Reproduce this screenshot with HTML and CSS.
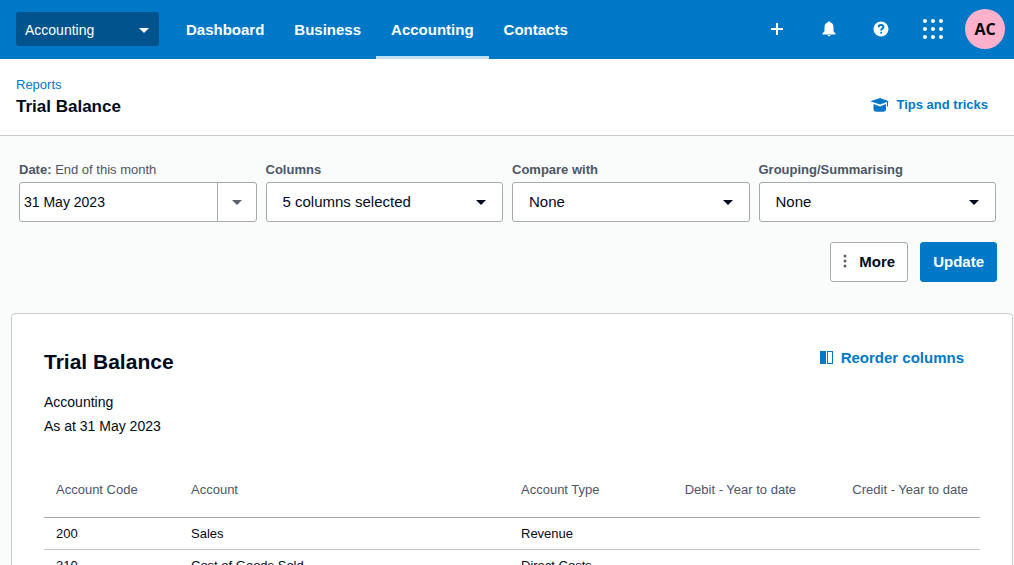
FILE: index.html
```html
<!DOCTYPE html>
<html lang="en">
<head>
<meta charset="utf-8">
<meta name="viewport" content="width=device-width, initial-scale=1">
<title>Trial Balance</title>
<link rel="stylesheet" href="styles.css">
</head>
<body>
<header class="topbar">
  <button class="org-switch" type="button">
    <span>Accounting</span>
    <svg class="caret" viewBox="0 0 10 5" aria-hidden="true"><path d="M0 0h10L5 5z"/></svg>
  </button>
  <nav class="tabs" aria-label="Main">
    <a class="tab" href="#">Dashboard</a>
    <a class="tab" href="#">Business</a>
    <a class="tab tab-active" href="#" aria-current="page">Accounting</a>
    <a class="tab" href="#">Contacts</a>
  </nav>
  <div class="tools">
    <button class="tool" type="button" aria-label="Create new">
      <svg width="12" height="12" viewBox="0 0 12 12"><path d="M5 0h2v5h5v2H7v5H5V7H0V5h5z"/></svg>
    </button>
    <button class="tool" type="button" aria-label="Notifications">
      <svg width="14" height="16" viewBox="0 0 14 16"><path d="M6 1.200a1 1 0 0 1 2 0C10.500 1.900 11.500 3.600 11.500 6v3.500c0 1 .6 1.700 2 2.700v1.300H.5v-1.300c1.400-1 2-1.700 2-2.700V6C2.500 3.600 3.500 1.900 6 1.200zM5.500 14h3a1.500 1.300 0 0 1-3 0z"/></svg>
    </button>
    <button class="tool" type="button" aria-label="Help">
      <svg width="16" height="16" viewBox="0 0 16 16"><circle cx="8" cy="8" r="7.500"/><path class="question" d="M5.700 6.200c0-1.500 1-2.300 2.300-2.300s2.400.8 2.400 2.100c0 1.600-2.300 1.600-2.300 3.500"/><path class="question-dot" d="M7.200 10.700h1.800v1.700H7.200z"/></svg>
    </button>
    <button class="tool" type="button" aria-label="Apps">
      <svg width="20" height="20" viewBox="0 0 20 20"><circle cx="2" cy="2" r="2"/><circle cx="10" cy="2" r="2"/><circle cx="18" cy="2" r="2"/><circle cx="2" cy="10" r="2"/><circle cx="10" cy="10" r="2"/><circle cx="18" cy="10" r="2"/><circle cx="2" cy="18" r="2"/><circle cx="10" cy="18" r="2"/><circle cx="18" cy="18" r="2"/></svg>
    </button>
    <button class="avatar" type="button">AC</button>
  </div>
</header>

<div class="page-head">
  <div>
    <a class="crumb" href="#">Reports</a>
    <h1 class="page-title">Trial Balance</h1>
  </div>
  <a class="tips" href="#">
    <svg width="20" height="16" viewBox="0 0 20 16" aria-hidden="true"><path d="M.3 4.200 10 1l9 3.200-1 .4V9.500h-1V5L10 7.500zM3.500 7 10 9.600 16 7v5.200c0 1.500-1.200 2.500-2.800 2.500H6.300c-1.600 0-2.800-1-2.800-2.500z"/></svg>
    <span>Tips and tricks</span>
  </a>
</div>

<main class="main">
  <form class="filters">
    <div class="filter-grid">
      <div class="field">
        <label class="label" for="date">Date: <span class="label-note">End of this month</span></label>
        <div class="date-box">
          <input class="date-input" id="date" type="text" value="31 May 2023">
          <button class="date-open" type="button" aria-label="Choose a date range">
            <svg class="caret" viewBox="0 0 10 5"><path d="M0 0h10L5 5z"/></svg>
          </button>
        </div>
      </div>
      <div class="field">
        <label class="label" for="columns">Columns</label>
        <div class="select-box">
          <select class="select" id="columns"><option>5 columns selected</option></select>
          <svg class="caret" viewBox="0 0 10 5" aria-hidden="true"><path d="M0 0h10L5 5z"/></svg>
        </div>
      </div>
      <div class="field">
        <label class="label" for="compare">Compare with</label>
        <div class="select-box">
          <select class="select" id="compare"><option>None</option></select>
          <svg class="caret" viewBox="0 0 10 5" aria-hidden="true"><path d="M0 0h10L5 5z"/></svg>
        </div>
      </div>
      <div class="field">
        <label class="label" for="grouping">Grouping/Summarising</label>
        <div class="select-box">
          <select class="select" id="grouping"><option>None</option></select>
          <svg class="caret" viewBox="0 0 10 5" aria-hidden="true"><path d="M0 0h10L5 5z"/></svg>
        </div>
      </div>
    </div>
    <div class="actions">
      <button class="btn" type="button">
        <svg width="4" height="16" viewBox="0 0 4 16" aria-hidden="true"><circle cx="2" cy="2" r="1.500"/><circle cx="2" cy="7" r="1.500"/><circle cx="2" cy="12" r="1.500"/></svg>
        <span>More</span>
      </button>
      <button class="btn btn-primary" type="button">Update</button>
    </div>
  </form>

  <section class="report">
    <div class="report-head">
      <h2 class="report-title">Trial Balance</h2>
      <button class="reorder" type="button">
        <svg width="13" height="15" viewBox="0 0 13 15" aria-hidden="true"><path d="M0 0h6v13H0zM7 0h6v13H7zm1 1v11h4V1z" fill-rule="evenodd"/></svg>
        <span>Reorder columns</span>
      </button>
    </div>
    <p class="report-line">Accounting</p>
    <p class="report-line">As at 31 May 2023</p>
    <table class="table">
      <colgroup><col class="col-code"><col><col class="col-type"><col class="col-amount"><col class="col-amount"></colgroup>
      <thead>
        <tr><th scope="col">Account Code</th><th scope="col">Account</th><th scope="col">Account Type</th><th class="amount" scope="col">Debit - Year to date</th><th class="amount" scope="col">Credit - Year to date</th></tr>
      </thead>
      <tbody>
        <tr><td>200</td><td>Sales</td><td>Revenue</td><td></td><td></td></tr>
        <tr><td>310</td><td>Cost of Goods Sold</td><td>Direct Costs</td><td></td><td></td></tr>
      </tbody>
    </table>
  </section>
</main>
</body>
</html>
```
FILE: styles.css
```css
* {
  box-sizing: border-box;
}

html {
  scrollbar-width: none;
}

body {
  margin: 0;
  background: #fafcfb;
  color: #000a1e;
  font: 15px/24px "Liberation Sans", Arial, sans-serif;
}

button,
input,
select {
  margin: 0;
  padding: 0;
  border: 0;
  background: none;
  color: inherit;
  font: inherit;
}

a {
  color: #0078c8;
  text-decoration: none;
}

h1,
h2,
p {
  margin: 0;
}

svg {
  flex: none;
  fill: currentColor;
}

.caret {
  width: 10px;
  height: 5px;
}

.topbar {
  display: flex;
  align-items: center;
  height: 59px;
  padding: 0 9px 0 16px;
  background: #0078c8;
  color: #fff;
}

.org-switch {
  display: flex;
  align-items: center;
  justify-content: space-between;
  width: 143px;
  height: 34px;
  margin-bottom: 1px;
  padding: 2px 10px 0 9px;
  border-radius: 3px;
  background: #00538c;
  font-size: 14px;
}

.tabs {
  display: flex;
  align-self: stretch;
  margin-left: 12px;
}

.tab {
  display: flex;
  align-items: center;
  padding: 0 15px;
  color: #fff;
  font-weight: bold;
}

.tab-active {
  box-shadow: inset 0 -3px #bfdef2;
}

.tools {
  display: flex;
  align-items: center;
  margin-bottom: 1px;
  margin-left: auto;
}

.tool {
  display: grid;
  place-items: center;
  width: 52px;
  height: 40px;
}

.question {
  fill: none;
  stroke: #0078c8;
  stroke-width: 2;
}

.question-dot {
  fill: #0078c8;
}

.avatar {
  width: 40px;
  height: 40px;
  margin-left: 6px;
  border-radius: 50%;
  background: #ffb1cb;
  color: #000;
  font: bold 16px/24px "Open Sans", sans-serif;
}

.page-head {
  display: flex;
  align-items: flex-end;
  justify-content: space-between;
  min-height: 77px;
  padding: 16px 26px 16px 16px;
  border-bottom: 1px solid #c9cbcf;
  background: #fff;
}

.crumb {
  display: block;
  font-size: 13px;
  line-height: 20px;
}

.page-title {
  font-size: 17px;
  line-height: 24px;
}

.tips {
  display: flex;
  align-items: center;
  gap: 6px;
  padding-bottom: 2px;
  font-size: 13px;
  font-weight: bold;
}

.filters {
  padding: 24px 17px 0 19px;
}

.filter-grid {
  display: grid;
  grid-template-columns: repeat(4, 1fr);
  gap: 9px;
  padding-right: 1px;
}

.field {
  min-width: 0;
}

.label {
  display: block;
  padding-bottom: 2px;
  color: #4d5568;
  font-size: 13px;
  font-weight: bold;
  line-height: 20px;
}

.label-note {
  font-weight: normal;
}

.date-box,
.select-box {
  height: 40px;
  border: 1px solid #a6a9b0;
  border-radius: 3px;
  background: #fff;
}

.date-box {
  display: flex;
}

.date-input {
  flex: 1;
  min-width: 0;
  padding-left: 4px;
  font-size: 14px;
}

.date-open {
  display: grid;
  place-items: center;
  width: 39px;
  border-left: 1px solid #a6a9b0;
  color: #59606d;
}

.select-box {
  display: grid;
  align-items: center;
}

.select-box > * {
  grid-area: 1 / 1;
}

.select {
  width: 100%;
  height: 38px;
  padding: 0 36px 0 16px;
  appearance: none;
}

.select-box .caret {
  justify-self: end;
  margin-right: 16px;
  pointer-events: none;
}

.actions {
  display: flex;
  justify-content: flex-end;
  gap: 12px;
  padding-top: 20px;
}

.btn {
  display: flex;
  align-items: center;
  gap: 12px;
  height: 40px;
  padding: 0 12px;
  border: 1px solid #a6a9b0;
  border-radius: 3px;
  background: #fff;
  font-weight: bold;
}

.btn svg {
  color: #59606d;
}

.btn-primary {
  border-color: #0078c8;
  background: #0078c8;
  color: #fff;
}

.report {
  margin: 31px 1px 0 11px;
  padding: 32px;
  border: 1px solid #c9cbcf;
  border-radius: 4px;
  background: #fff;
}

.report-head {
  display: flex;
  align-items: flex-start;
  justify-content: space-between;
  padding: 0 16px 12px 0;
}

.report-title {
  font-size: 21px;
  line-height: 32px;
}

.reorder {
  display: flex;
  align-items: center;
  gap: 8px;
  color: #0078c8;
  font-weight: bold;
}

.report-line {
  font-size: 14px;
}

.table {
  width: 100%;
  margin-top: 24px;
  border-collapse: separate;
  border-spacing: 0;
  table-layout: fixed;
  font-size: 13px;
  line-height: 15px;
}

.col-code {
  width: 135px;
}

.col-type {
  width: 127px;
}

.col-amount {
  width: 172px;
}

.table th,
.table td {
  padding: 8px 12px;
  border-bottom: 1px solid #c9cbcf;
  text-align: left;
}

.table th {
  height: 56px;
  border-color: #a6a9b0;
  color: #4d5568;
  font-weight: normal;
}

.table .amount {
  text-align: right;
}
```
